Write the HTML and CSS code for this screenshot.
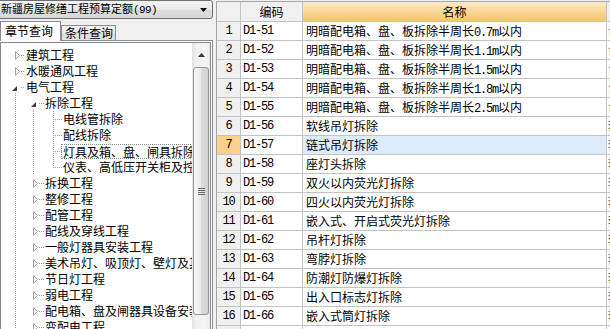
FILE: index.html
```html
<!DOCTYPE html>
<html lang="zh-CN">
<head>
<meta charset="utf-8">
<title>定额查询</title>
<link rel="stylesheet" href="styles.css">
</head>
<body>
<div class="app">
  <div class="left">
    <div class="combo">
      <span class="combo-text">新疆房屋修缮工程预算定额<span class="asc">(99)</span></span>
      <svg class="combo-arrow" width="7" height="4" viewBox="0 0 7 4"><path d="M0 0H7L3.5 4Z" fill="#000"/></svg>
    </div>
    <div class="tabs">
      <div class="tab active">章节查询</div>
      <div class="tab">条件查询</div>
    </div>
    <div class="pane">
      <div class="tree">
        <div class="tree-content">
          <div class="row"><svg class="g" width="25" height="16"><polygon class="tc" points="14.5,4.5 18.5,8.5 14.5,12.5"/><line x1="20" y1="8.5" x2="24" y2="8.5"/></svg><span class="label">建筑工程</span></div>
          <div class="row"><svg class="g" width="25" height="16"><polygon class="tc" points="14.5,4.5 18.5,8.5 14.5,12.5"/><line x1="20" y1="8.5" x2="24" y2="8.5"/></svg><span class="label">水暖通风工程</span></div>
          <div class="row"><svg class="g" width="25" height="16"><polygon class="te" points="16,7 16,12 11,12"/><line x1="20" y1="8.5" x2="24" y2="8.5"/><line x1="14.5" y1="14" x2="14.5" y2="16"/></svg><span class="label">电气工程</span></div>
          <div class="row"><svg class="g" width="44" height="16"><line x1="14.5" y1="0" x2="14.5" y2="16"/><polygon class="te" points="35,7 35,12 30,12"/><line x1="38" y1="8.5" x2="44" y2="8.5"/><line x1="32.5" y1="14" x2="32.5" y2="16"/></svg><span class="label">拆除工程</span></div>
          <div class="row"><svg class="g" width="62" height="16"><line x1="14.5" y1="0" x2="14.5" y2="16"/><line x1="32.5" y1="0" x2="32.5" y2="16"/><line x1="52.5" y1="0" x2="52.5" y2="16"/><line x1="54" y1="8.5" x2="61" y2="8.5"/></svg><span class="label">电线管拆除</span></div>
          <div class="row"><svg class="g" width="62" height="16"><line x1="14.5" y1="0" x2="14.5" y2="16"/><line x1="32.5" y1="0" x2="32.5" y2="16"/><line x1="52.5" y1="0" x2="52.5" y2="16"/><line x1="54" y1="8.5" x2="61" y2="8.5"/></svg><span class="label">配线拆除</span></div>
          <div class="row"><svg class="g" width="62" height="16"><line x1="14.5" y1="0" x2="14.5" y2="16"/><line x1="32.5" y1="0" x2="32.5" y2="16"/><line x1="52.5" y1="0" x2="52.5" y2="16"/><line x1="54" y1="8.5" x2="61" y2="8.5"/></svg><span class="label focus">灯具及箱、盘、闸具拆除</span></div>
          <div class="row"><svg class="g" width="62" height="16"><line x1="14.5" y1="0" x2="14.5" y2="16"/><line x1="32.5" y1="0" x2="32.5" y2="16"/><line x1="52.5" y1="0" x2="52.5" y2="9"/><line x1="54" y1="8.5" x2="61" y2="8.5"/></svg><span class="label">仪表、高低压开关柜及控制台拆除</span></div>
          <div class="row"><svg class="g" width="44" height="16"><line x1="14.5" y1="0" x2="14.5" y2="16"/><polygon class="tc" points="32.5,4.5 36.5,8.5 32.5,12.5"/><line x1="38" y1="8.5" x2="44" y2="8.5"/></svg><span class="label">拆换工程</span></div>
          <div class="row"><svg class="g" width="44" height="16"><line x1="14.5" y1="0" x2="14.5" y2="16"/><polygon class="tc" points="32.5,4.5 36.5,8.5 32.5,12.5"/><line x1="38" y1="8.5" x2="44" y2="8.5"/></svg><span class="label">整修工程</span></div>
          <div class="row"><svg class="g" width="44" height="16"><line x1="14.5" y1="0" x2="14.5" y2="16"/><polygon class="tc" points="32.5,4.5 36.5,8.5 32.5,12.5"/><line x1="38" y1="8.5" x2="44" y2="8.5"/></svg><span class="label">配管工程</span></div>
          <div class="row"><svg class="g" width="44" height="16"><line x1="14.5" y1="0" x2="14.5" y2="16"/><polygon class="tc" points="32.5,4.5 36.5,8.5 32.5,12.5"/><line x1="38" y1="8.5" x2="44" y2="8.5"/></svg><span class="label">配线及穿线工程</span></div>
          <div class="row"><svg class="g" width="44" height="16"><line x1="14.5" y1="0" x2="14.5" y2="16"/><polygon class="tc" points="32.5,4.5 36.5,8.5 32.5,12.5"/><line x1="38" y1="8.5" x2="44" y2="8.5"/></svg><span class="label">一般灯器具安装工程</span></div>
          <div class="row"><svg class="g" width="44" height="16"><line x1="14.5" y1="0" x2="14.5" y2="16"/><polygon class="tc" points="32.5,4.5 36.5,8.5 32.5,12.5"/><line x1="38" y1="8.5" x2="44" y2="8.5"/></svg><span class="label">美术吊灯、吸顶灯、壁灯及其他灯具安装工程</span></div>
          <div class="row"><svg class="g" width="44" height="16"><line x1="14.5" y1="0" x2="14.5" y2="16"/><polygon class="tc" points="32.5,4.5 36.5,8.5 32.5,12.5"/><line x1="38" y1="8.5" x2="44" y2="8.5"/></svg><span class="label">节日灯工程</span></div>
          <div class="row"><svg class="g" width="44" height="16"><line x1="14.5" y1="0" x2="14.5" y2="16"/><polygon class="tc" points="32.5,4.5 36.5,8.5 32.5,12.5"/><line x1="38" y1="8.5" x2="44" y2="8.5"/></svg><span class="label">弱电工程</span></div>
          <div class="row"><svg class="g" width="44" height="16"><line x1="14.5" y1="0" x2="14.5" y2="16"/><polygon class="tc" points="32.5,4.5 36.5,8.5 32.5,12.5"/><line x1="38" y1="8.5" x2="44" y2="8.5"/></svg><span class="label">配电箱、盘及闸器具设备安装工程</span></div>
          <div class="row"><svg class="g" width="44" height="16"><line x1="14.5" y1="0" x2="14.5" y2="16"/><polygon class="tc" points="32.5,4.5 36.5,8.5 32.5,12.5"/><line x1="38" y1="8.5" x2="44" y2="8.5"/></svg><span class="label">变配电工程</span></div>
        </div>
        <div class="vscroll">
          <div class="sb-btn"><svg width="7" height="4" viewBox="0 0 7 4"><path d="M0 4H7L3.5 0Z" fill="#3a3a3a"/></svg></div>
          <div class="sb-thumb"><svg width="7" height="7" viewBox="0 0 7 7"><path d="M0 .5H7M0 2.5H7M0 4.5H7M0 6.5H7" stroke="#6d6d6d" stroke-width="1"/></svg></div>
        </div>
      </div>
    </div>
  </div>
  <div class="splitter"></div>
  <div class="right">
    <div class="grid">
      <div class="c hc"></div><div class="c hc">编码</div><div class="c hc sort">名称</div><div class="c hc"></div>

      <div class="c rn">1</div><div class="c code">D1-51</div><div class="c name">明暗配电箱、盘、板拆除半周长<span class="asc">0.7m</span>以内</div><div class="c more">台</div>
      <div class="c rn">2</div><div class="c code">D1-52</div><div class="c name">明暗配电箱、盘、板拆除半周长<span class="asc">1.1m</span>以内</div><div class="c more">台</div>
      <div class="c rn">3</div><div class="c code">D1-53</div><div class="c name">明暗配电箱、盘、板拆除半周长<span class="asc">1.5m</span>以内</div><div class="c more">台</div>
      <div class="c rn">4</div><div class="c code">D1-54</div><div class="c name">明暗配电箱、盘、板拆除半周长<span class="asc">1.8m</span>以内</div><div class="c more">台</div>
      <div class="c rn">5</div><div class="c code">D1-55</div><div class="c name">明暗配电箱、盘、板拆除半周长<span class="asc">2.5m</span>以内</div><div class="c more">台</div>
      <div class="c rn">6</div><div class="c code">D1-56</div><div class="c name">软线吊灯拆除</div><div class="c more">套</div>
      <div class="c rn sel">7</div><div class="c code">D1-57</div><div class="c name sel">链式吊灯拆除</div><div class="c more">套</div>
      <div class="c rn">8</div><div class="c code">D1-58</div><div class="c name">座灯头拆除</div><div class="c more">套</div>
      <div class="c rn">9</div><div class="c code">D1-59</div><div class="c name">双火以内荧光灯拆除</div><div class="c more">套</div>
      <div class="c rn">10</div><div class="c code">D1-60</div><div class="c name">四火以内荧光灯拆除</div><div class="c more">套</div>
      <div class="c rn">11</div><div class="c code">D1-61</div><div class="c name">嵌入式、开启式荧光灯拆除</div><div class="c more">套</div>
      <div class="c rn">12</div><div class="c code">D1-62</div><div class="c name">吊杆灯拆除</div><div class="c more">套</div>
      <div class="c rn">13</div><div class="c code">D1-63</div><div class="c name">弯脖灯拆除</div><div class="c more">套</div>
      <div class="c rn">14</div><div class="c code">D1-64</div><div class="c name">防潮灯防爆灯拆除</div><div class="c more">套</div>
      <div class="c rn">15</div><div class="c code">D1-65</div><div class="c name">出入口标志灯拆除</div><div class="c more">套</div>
      <div class="c rn">16</div><div class="c code">D1-66</div><div class="c name">嵌入式筒灯拆除</div><div class="c more">套</div>
      <div class="c rn">17</div><div class="c code">D1-67</div><div class="c name">草坪灯拆除</div><div class="c more">套</div>
    </div>
  </div>
</div>
</body>
</html>
```

FILE: styles.css
```css
html, body {
  margin: 0;
  padding: 0;
  width: 610px;
  height: 329px;
  overflow: hidden;
  background: #f0f0f0;
  font-family: "Noto Sans CJK SC", "Noto Sans", sans-serif;
  font-size: 12px;
  color: #000;
}

.app {
  display: flex;
  height: 329px;
}

.asc {
  font-family: "Liberation Mono", "DejaVu Sans Mono", monospace;
  font-size: 12px;
  letter-spacing: -1.2px;
}

/* ---------- left panel ---------- */
.left {
  flex: none;
  width: 215px;
  margin-left: -2px;
  display: flex;
  flex-direction: column;
  overflow: hidden;
}

.combo {
  flex: none;
  height: 19px;
  box-sizing: border-box;
  border: 1px solid #707070;
  border-radius: 0 3px 3px 0;
  background: linear-gradient(#f4f4f4, #e9e9e9 50%, #dcdcdc 51%, #d9d9d9);
  display: flex;
  align-items: center;
  justify-content: space-between;
  padding: 0 5px 0 2px;
  font-size: 11px;
  line-height: 17px;
  white-space: nowrap;
}

.combo .asc {
  font-size: 11px;
  letter-spacing: -0.6px;
}

.combo-arrow {
  display: block;
  margin-top: 1px;
}

.tabs {
  flex: none;
  display: flex;
  align-items: flex-end;
  height: 19px;
  margin-top: 2px;
  padding-left: 2px;
}

.tab {
  box-sizing: border-box;
  width: 55px;
  height: 15px;
  border: 1px solid #898c95;
  border-bottom: none;
  padding: 0 0 0 3px;
  line-height: 14px;
  font-size: 12px;
  white-space: nowrap;
  background: linear-gradient(#f3f3f3, #ebebeb 50%, #dddddd 51%, #e3e3e3);
}

.tab.active {
  width: 61px;
  height: 20px;
  margin-bottom: -1px;
  padding-left: 4px;
  line-height: 18px;
  background: #fff;
  z-index: 1;
}

.pane {
  flex: none;
  height: 320px;
  border: 1px solid #898c95;
  padding: 1px 1px 0;
  background: #fff;
  display: flex;
}

.tree {
  flex: 1;
  min-width: 0;
  border: 1px solid #828790;
  background: #fff;
  display: flex;
}

.tree-content {
  flex: 1;
  min-width: 0;
  overflow: hidden;
  padding-top: 4px;
}

.row {
  display: flex;
  align-items: center;
  height: 16px;
  white-space: nowrap;
}

.g {
  display: block;
  flex: none;
}

.g line {
  stroke: #a0a0a0;
  stroke-width: 1;
  stroke-dasharray: 1 1;
}

.g .tc {
  fill: #fff;
  stroke: #a6a6a6;
  stroke-width: 1;
}

.g .te {
  fill: #3c3c3c;
}

.label {
  line-height: 16px;
}

.label.focus {
  box-sizing: border-box;
  height: 15px;
  line-height: 13px;
  border: 1px dotted #8a8a8a;
  border-right: none;
  padding-left: 1px;
  margin-left: -2px;
}

.vscroll {
  flex: none;
  width: 18px;
  display: flex;
  flex-direction: column;
  background: linear-gradient(90deg, #e2e2e2, #f1f1f1 25%, #f4f4f4 75%, #e9e9e9);
}

.sb-btn {
  height: 22px;
  display: flex;
  align-items: center;
  justify-content: center;
  padding-top: 2px;
  box-sizing: border-box;
}

.sb-thumb {
  box-sizing: border-box;
  height: 248px;
  margin: 2px 1px 0 1px;
  border: 1px solid #979797;
  border-radius: 3px;
  background: linear-gradient(90deg, #f6f6f6, #ececec 50%, #dcdcdc 51%, #d2d2d2);
  display: flex;
  align-items: center;
  justify-content: center;
}

.sb-thumb svg {
  display: block;
}

.splitter {
  flex: none;
  width: 3px;
  background: #f0f0f0;
}

/* ---------- right table ---------- */
.right {
  flex: 1;
  min-width: 0;
  overflow: hidden;
  padding-top: 1px;
}

.grid {
  display: grid;
  grid-template-columns: 23px 61px 303px 60px;
  grid-template-rows: 19px;
  grid-auto-rows: 18px;
  gap: 1px;
  width: max-content;
  background: #c3c3c3;
  border-top: 1px solid #a5a5a5;
  border-left: 1px solid #a5a5a5;
}

.c {
  background: #fff;
  font-size: 12px;
  line-height: 18px;
  white-space: nowrap;
  overflow: hidden;
}

.hc {
  background: #f0f0f0;
  text-align: center;
  line-height: 19px;
}

.hc.sort {
  background: linear-gradient(#fdebc8, #f9d89a 50%, #f5c56f);
}

.rn {
  background: #f0f0f0;
  text-align: center;
  font-family: "Liberation Mono", "DejaVu Sans Mono", monospace;
  font-size: 12px;
  letter-spacing: -1.2px;
}

.rn.sel {
  background: #fcd18b;
}

.code {
  padding-left: 2px;
  font-family: "Liberation Mono", "DejaVu Sans Mono", monospace;
  font-size: 12px;
  letter-spacing: -1.2px;
}

.name {
  padding-left: 3px;
}

.name.sel {
  background: #ddecfc;
}

.more {
  padding-left: 1px;
}
```
